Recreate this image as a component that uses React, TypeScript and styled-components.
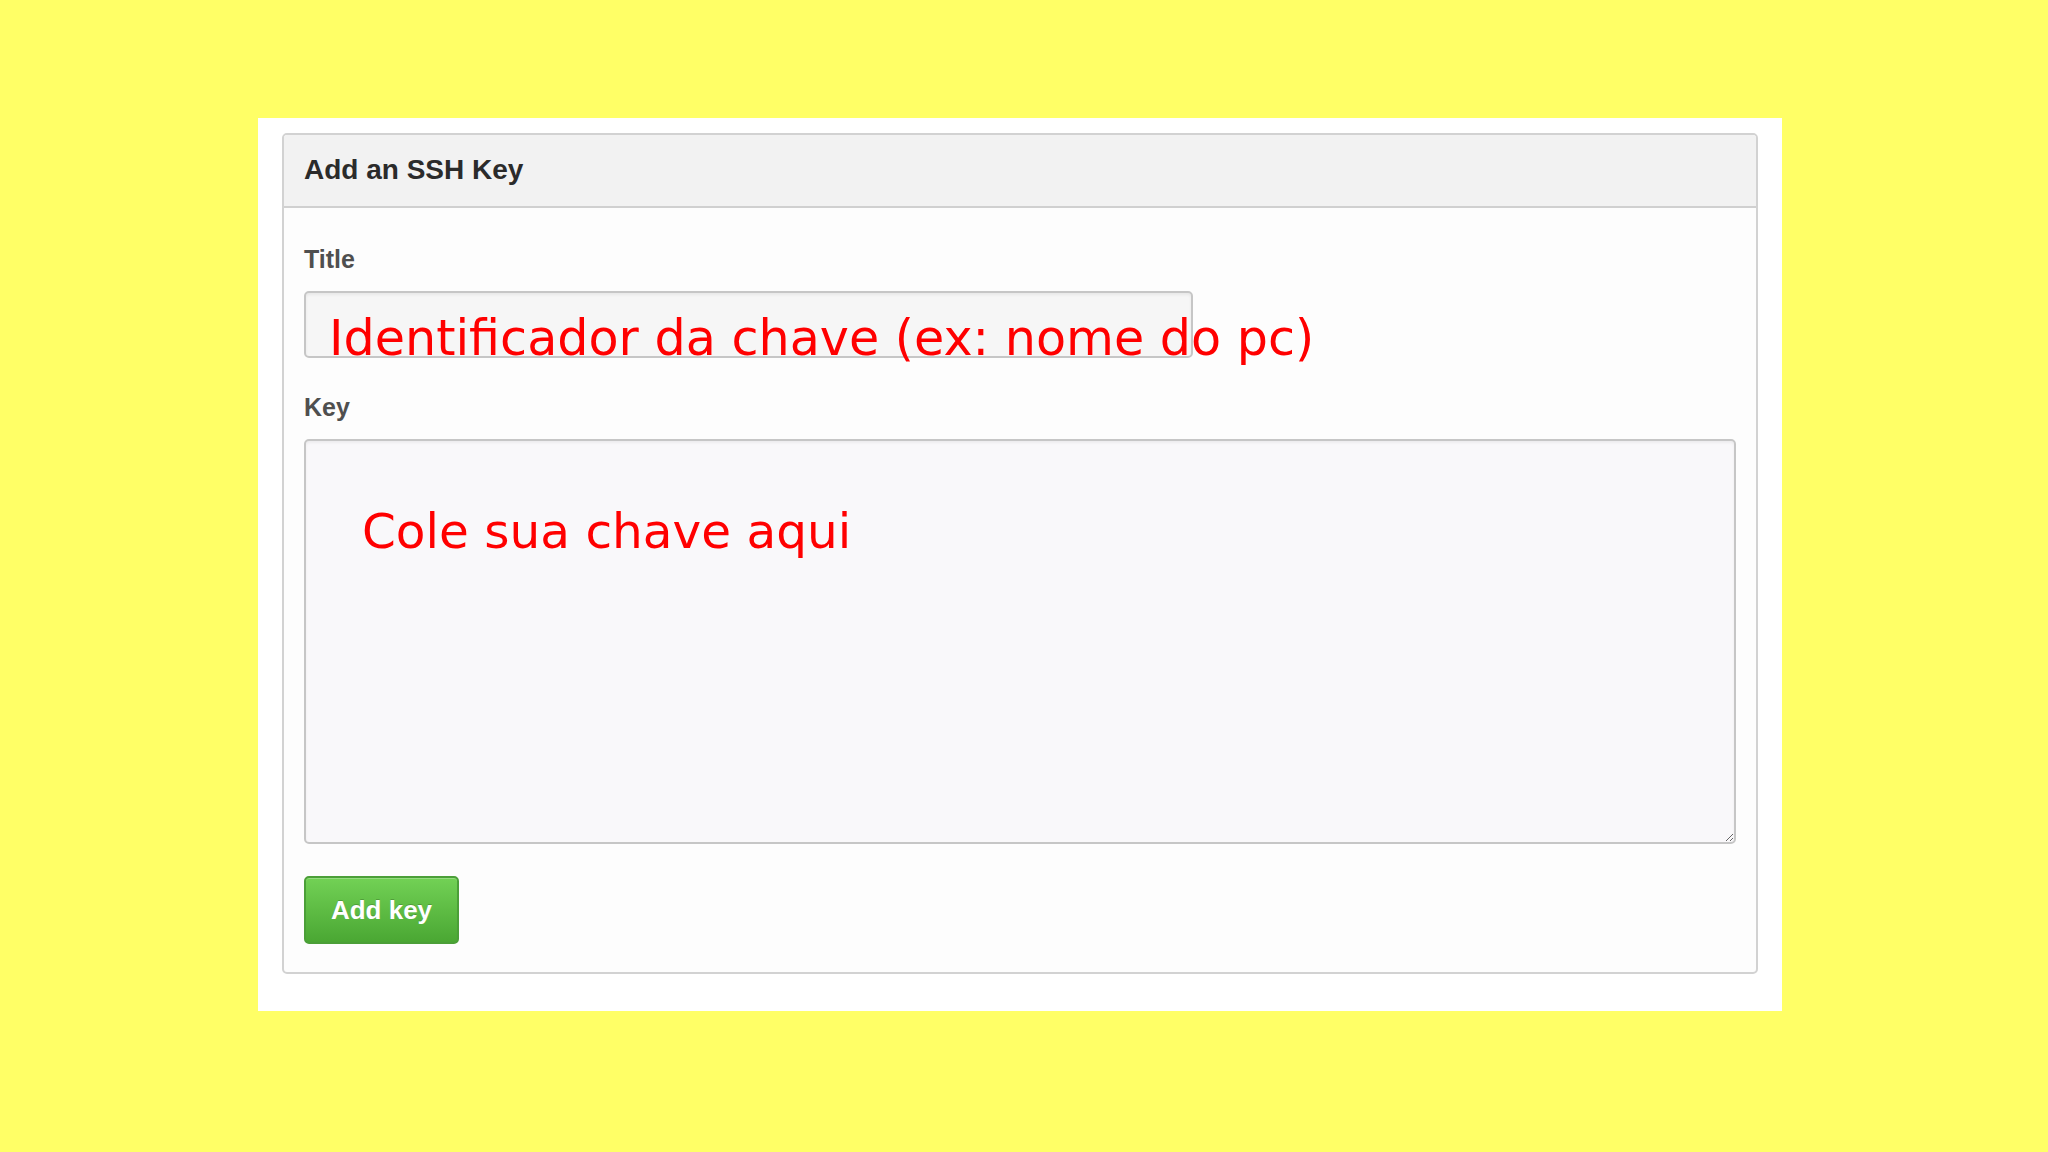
import styled, { createGlobalStyle } from 'styled-components';

const GlobalStyle = createGlobalStyle`
  html, body {
    margin: 0;
    padding: 0;
    background: #ffff66;
  }

  body {
    font-family: 'Liberation Sans', Arial, Helvetica, sans-serif;
  }
`;

const Page = styled.div`
  min-height: 1152px;
  padding: 118px 0 0 258px;
  box-sizing: border-box;
`;

const Sheet = styled.div`
  width: 1524px;
  height: 893px;
  box-sizing: border-box;
  background: #ffffff;
  padding: 15px 24px 0 24px;
`;

const Box = styled.section`
  border: 2px solid #d2d2d2;
  border-radius: 5px;
  background: #fdfdfd;
  overflow: hidden;
`;

const BoxHeader = styled.header`
  height: 73px;
  box-sizing: border-box;
  display: flex;
  align-items: center;
  padding: 0 20px 2px 20px;
  background: #f2f2f2;
  border-bottom: 2px solid #d0d0d0;
  color: #2b2b2b;
  font-size: 28px;
  font-weight: bold;
`;

const BoxBody = styled.div`
  display: flex;
  flex-direction: column;
  align-items: flex-start;
  padding: 36px 20px 28px 20px;
`;

const Label = styled.label`
  display: block;
  font-size: 25px;
  line-height: 30px;
  font-weight: bold;
  color: #4f4f4f;
  margin-bottom: 17px;
`;

const Field = styled.div<{ $gap?: number }>`
  position: relative;
  margin-bottom: ${(p) => p.$gap ?? 0}px;
`;

const TitleInput = styled.input`
  display: block;
  width: 889px;
  height: 67px;
  box-sizing: border-box;
  border: 2px solid #c6c6c6;
  border-radius: 5px;
  background: #f6f6f6;
  box-shadow: inset 0 2px 3px rgba(0, 0, 0, 0.06);
  outline: none;
`;

const KeyArea = styled.textarea`
  display: block;
  width: 1432px;
  height: 405px;
  box-sizing: border-box;
  border: 2px solid #c6c6c6;
  border-radius: 5px;
  background: #f9f8fa;
  box-shadow: inset 0 2px 3px rgba(0, 0, 0, 0.05);
  outline: none;
  resize: vertical;
`;

// red hand-written notes laid over the form fields
const Note = styled.span<{ $top: number; $left: number; $size: number }>`
  position: absolute;
  top: ${(p) => p.$top}px;
  left: ${(p) => p.$left}px;
  font-family: 'DejaVu Sans', Verdana, sans-serif;
  font-size: ${(p) => p.$size}px;
  line-height: 1;
  color: #ff0000;
  white-space: nowrap;
  pointer-events: none;
`;

const AddButton = styled.button`
  width: 155px;
  height: 68px;
  margin-top: 32px;
  border: 2px solid #4b9f38;
  border-radius: 5px;
  background: linear-gradient(#72d155, #4aa733);
  color: #ffffff;
  font-family: 'Liberation Sans', Arial, Helvetica, sans-serif;
  font-size: 26px;
  font-weight: bold;
  text-shadow: 0 -1px 0 rgba(0, 0, 0, 0.2);
  box-shadow: inset 0 1px 0 rgba(255, 255, 255, 0.25);
  cursor: pointer;
`;

export default function App() {
  return (
    <>
      <GlobalStyle />
      <Page>
        <Sheet>
          <Box>
            <BoxHeader>Add an SSH Key</BoxHeader>
            <BoxBody>
              <Label>Title</Label>
              <Field $gap={34}>
                <TitleInput type="text" />
                <Note $top={23} $left={25} $size={49.2}>Identificador da chave (ex: nome do pc)</Note>
              </Field>
              <Label>Key</Label>
              <Field>
                <KeyArea />
                <Note $top={68} $left={58} $size={48.5}>Cole sua chave aqui</Note>
              </Field>
              <AddButton>Add key</AddButton>
            </BoxBody>
          </Box>
        </Sheet>
      </Page>
    </>
  );
}
